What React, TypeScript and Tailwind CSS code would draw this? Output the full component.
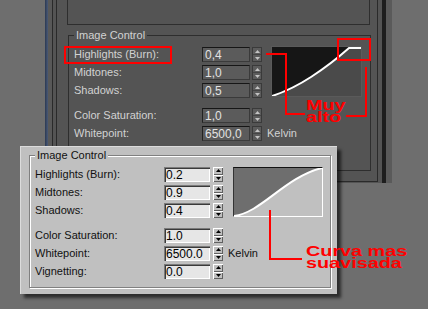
import React from 'react';

type Row = { label: string; value: string; kelvin?: boolean };

const TOP_ROWS_DARK: Row[] = [
  { label: 'Highlights (Burn):', value: '0,4' },
  { label: 'Midtones:', value: '1,0' },
  { label: 'Shadows:', value: '0,5' },
];
// the dark dialog's Vignetting row sits under the light dialog, so it is left out
const BOTTOM_ROWS_DARK: Row[] = [
  { label: 'Color Saturation:', value: '1,0' },
  { label: 'Whitepoint:', value: '6500,0', kelvin: true },
];
const TOP_ROWS_LIGHT: Row[] = [
  { label: 'Highlights (Burn):', value: '0.2' },
  { label: 'Midtones:', value: '0.9' },
  { label: 'Shadows:', value: '0.4' },
];
const BOTTOM_ROWS_LIGHT: Row[] = [
  { label: 'Color Saturation:', value: '1.0' },
  { label: 'Whitepoint:', value: '6500.0', kelvin: true },
  { label: 'Vignetting:', value: '0.0' },
];

function Arrow({ up, color }: { up: boolean; color: string }) {
  return (
    <svg width="5" height="3" viewBox="0 0 5 3">
      <path d={up ? 'M2.5 0 L5 3 L0 3 Z' : 'M0 0 L5 0 L2.5 3 Z'} fill={color} />
    </svg>
  );
}

function Spinner({ light }: { light: boolean }) {
  if (light) {
    return (
      <div className="flex h-[15px] w-[10px] flex-col">
        <div className="flex flex-1 items-center justify-center bg-[#c0c0c0] shadow-[inset_1px_1px_0_#ffffff,inset_-1px_-1px_0_#606060]">
          <Arrow up color="#000" />
        </div>
        <div className="flex flex-1 items-center justify-center bg-[#c0c0c0] shadow-[inset_1px_1px_0_#ffffff,inset_-1px_-1px_0_#606060]">
          <Arrow up={false} color="#000" />
        </div>
      </div>
    );
  }
  return (
    <div className="flex h-[15px] w-[10px] flex-col border border-[#3a3a3a] bg-[#5c5c5c]">
      <div className="flex flex-1 items-center justify-center border-b border-[#444]">
        <Arrow up color="#c4c4c4" />
      </div>
      <div className="flex flex-1 items-center justify-center">
        <Arrow up={false} color="#c4c4c4" />
      </div>
    </div>
  );
}

function FieldRow({ row, light }: { row: Row; light: boolean }) {
  return (
    <div className="flex h-[15px] items-center">
      <span
        className={
          light
            ? 'w-[129px] text-[11px] leading-[15px] text-[#111]'
            : 'w-[128px] text-[11px] leading-[15px] text-[#d2d2d2]'
        }
      >
        {row.label}
      </span>
      <div
        className={
          light
            ? 'flex h-[15px] w-[46px] items-center bg-[#e6e6e6] pl-[2px] text-[12px] text-black shadow-[inset_1px_1px_0_#7a7a7a,inset_2px_2px_0_#3a3a3a,inset_-1px_-1px_0_#ffffff]'
            : 'flex h-[15px] w-[48px] items-center border border-[#3a3a3a] border-t-[#161616] border-l-[#222] bg-[#5b5b5b] pl-[2px] text-[12px] text-[#e2e2e2]'
        }
      >
        {row.value}
      </div>
      <div className={light ? 'ml-[3px]' : 'ml-[2px]'}>
        <Spinner light={light} />
      </div>
      {row.kelvin && (
        <span className={light ? 'ml-[5px] text-[11px] text-[#111]' : 'ml-[5px] text-[11px] text-[#d2d2d2]'}>
          Kelvin
        </span>
      )}
    </div>
  );
}

function DarkGraph() {
  return (
    <div className="h-[51px] w-[91px] border border-[#5a5a5a] bg-[#4a4a4a]">
      <svg width="89" height="49" viewBox="1 1 89 49" className="block">
        <path d="M1 50 Q20 44 40 31 T78 2 L90 2 L90 0 L0 0 L0 50 Z" fill="#161616" />
        <path d="M1 50 Q20 44 40 31 T78 2 L90 2" fill="none" stroke="#ffffff" strokeWidth="2" />
      </svg>
    </div>
  );
}

function LightGraph() {
  return (
    <div className="h-[50px] w-[90px] border border-[#ffffff] border-t-[#111] border-l-[#333] bg-[#c0c0c0]">
      <svg width="88" height="48" viewBox="1 1 88 48" className="block">
        <path d="M1 49 C28 46 52 10 89 1 L89 0 L0 0 L0 49 Z" fill="#6e6e6e" />
        <path d="M1 49 C28 46 52 10 89 1" fill="none" stroke="#ffffff" strokeWidth="2" />
      </svg>
    </div>
  );
}

function Note({ lines, left, top }: { lines: string[]; left: string; top: string }) {
  return (
    <div className={`absolute ${left} ${top} flex flex-col`}>
      {lines.map((l) => (
        <span
          key={l}
          className="block h-[12px] origin-left scale-x-[1.32] overflow-visible whitespace-nowrap text-[15px] font-bold leading-[12px] text-[#ff0000]"
        >
          {l}
        </span>
      ))}
    </div>
  );
}

export default function App() {
  return (
    <div className="relative h-[309px] w-[428px] overflow-hidden bg-[#6e6e6e] font-['Liberation_Sans',Arial,sans-serif]">
      {/* dark rollout (background screenshot) */}
      <div className="ml-[45px] flex h-[183px] w-[347px] bg-[#545454]">
        <div className="w-[3px] bg-gradient-to-r from-[#2b3953] to-[#4b5a76]" />
        <div className="w-[4px] bg-[#585858]" />
        <div className="w-px bg-[#2a2a2a]" />
        <div className="w-[3px]" />
        <div className="h-[182px] w-[322px] border-x border-b border-[#2a2a2a]">
          <div className="ml-[10px] h-[25px] w-[303px] border-x border-b border-[#2e2e2e]" />
          <div className="relative ml-[11px] mt-[10px] h-[136px] w-[303px] border border-[#2e2e2e] pl-[5px] pt-[10px]">
            <span className="absolute -top-[8px] left-[5px] bg-[#545454] px-[2px] text-[11px] leading-[14px] text-[#d2d2d2]">
              Image Control
            </span>
            <div className="flex">
              <div className="flex flex-col gap-[3px] pt-[1px]">
                {TOP_ROWS_DARK.map((r) => (
                  <FieldRow key={r.label} row={r} light={false} />
                ))}
              </div>
              <div className="ml-[9px]">
                <DarkGraph />
              </div>
            </div>
            <div className="mt-[10px] flex flex-col gap-[3px]">
              {BOTTOM_ROWS_DARK.map((r) => (
                <FieldRow key={r.label} row={r} light={false} />
              ))}
            </div>
          </div>
        </div>
        <div className="w-[4px]" />
        <div className="w-[4px] bg-[#1e1e1e]" />
        <div className="w-[6px] bg-[#5a5a5a]" />
      </div>

      {/* light dialog (overlaid screenshot) */}
      <div className="absolute left-[20px] top-[146px] h-[148px] w-[317px] bg-[#c0c0c0] pl-[9px] pt-[9px] shadow-[inset_1px_1px_0_#dcdcdc,4px_4px_3px_rgba(0,0,0,0.6)]">
        <div className="relative h-[133px] w-[302px] border border-[#808080] pl-[5px] pt-[11px] shadow-[inset_1px_1px_0_#ffffff,1px_1px_0_#ffffff]">
          <span className="absolute -top-[8px] left-[5px] bg-[#c0c0c0] px-[2px] text-[11px] leading-[14px] text-[#111]">
            Image Control
          </span>
          <div className="flex">
            <div className="flex flex-col gap-[3px]">
              {TOP_ROWS_LIGHT.map((r) => (
                <FieldRow key={r.label} row={r} light />
              ))}
            </div>
            <div className="ml-[10px]">
              <LightGraph />
            </div>
          </div>
          <div className="mt-[10px] flex flex-col gap-[3px]">
            {BOTTOM_ROWS_LIGHT.map((r) => (
              <FieldRow key={r.label} row={r} light />
            ))}
          </div>
        </div>
      </div>

      {/* red annotations */}
      <svg className="pointer-events-none absolute left-0 top-0" width="428" height="309" shapeRendering="crispEdges">
        <g fill="none" stroke="#ff0000" strokeWidth="2">
          <rect x="65" y="47" width="106" height="16" />
          <rect x="338" y="39" width="32" height="21" />
          <polyline points="266,54 286,54 286,114 305,114" />
          <polyline points="366,67 366,116 346,116" />
          <polyline points="270,210 270,259 302,259" />
        </g>
      </svg>
      <Note lines={['Muy', 'alto']} left="left-[306px]" top="top-[99px]" />
      <Note lines={['Curva mas', 'suavisada']} left="left-[306px]" top="top-[245px]" />
    </div>
  );
}
